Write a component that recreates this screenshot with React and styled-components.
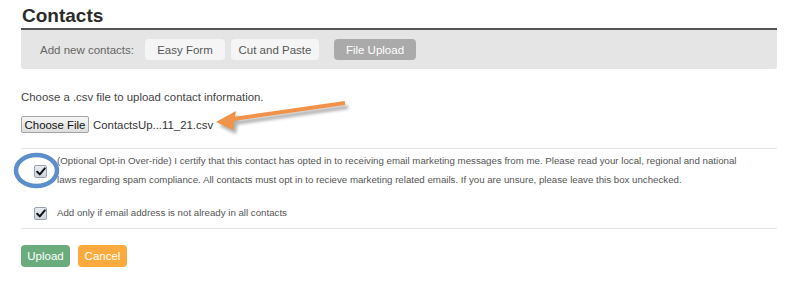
import React from "react";
import styled, { createGlobalStyle } from "styled-components";

const Global = createGlobalStyle`
  html, body { margin: 0; padding: 0; background: #fff; }
  body { font-family: "Liberation Sans", Arial, sans-serif; color: #444; }
`;

const Page = styled.div`
  position: relative;
  width: 800px;
  height: 295px;
  padding: 0 23px 0 21px;
  box-sizing: border-box;
`;

const Title = styled.h1`
  margin: 0;
  padding: 5px 0 0 1px;
  height: 23px;
  font-size: 19px;
  line-height: 22px;
  font-weight: bold;
  color: #2b2b2b;
`;

const Toolbar = styled.div`
  display: flex;
  align-items: center;
  height: 39px;
  border-top: 2px solid #555;
  background: #e5e5e5;
  border-radius: 0 0 3px 3px;
  padding-left: 19px;
  gap: 6px;
  font-size: 11.5px;
`;

const ToolLabel = styled.span`
  color: #666;
  margin-right: 5px;
`;

const TabButton = styled.span`
  display: inline-flex;
  align-items: center;
  justify-content: center;
  height: 21px;
  width: ${(p) => p.$w}px;
  border-radius: 4px;
  background: ${(p) => (p.$active ? "#aaaaaa" : "#f5f5f5")};
  color: ${(p) => (p.$active ? "#fff" : "#555")};
  margin-left: ${(p) => p.$ml || 0}px;
`;

const Intro = styled.p`
  margin: 20px 0 0 0;
  font-size: 11.4px;
  line-height: 16px;
  color: #444;
`;

const FileRow = styled.div`
  display: flex;
  align-items: center;
  margin-top: 11px;
  gap: 4px;
  font-size: 11.4px;
`;

const FileButton = styled.span`
  display: inline-flex;
  align-items: center;
  justify-content: center;
  width: 66px;
  height: 15px;
  border: 1px solid #a5a5a5;
  border-radius: 2px;
  background: linear-gradient(#f6f6f6, #dedede);
  color: #111;
  font-size: 11.4px;
`;

const FileName = styled.span`
  color: #333;
`;

const Rule = styled.hr`
  border: 0;
  border-top: 1px solid #e3e3e3;
  margin: ${(p) => p.$mt}px 0 0 0;
`;

const CheckRow = styled.div`
  display: flex;
  align-items: flex-start;
  gap: 10px;
  padding-left: 13px;
  margin-top: ${(p) => p.$mt}px;
`;

const Box = styled.span`
  flex: none;
  width: 11px;
  height: 11px;
  margin-top: ${(p) => p.$mt}px;
  border: 1px solid #9aa3b0;
  border-radius: 2px;
  background: linear-gradient(#e9edf3, #cdd4de);
  display: flex;
  align-items: center;
  justify-content: center;
`;

const CheckText = styled.div`
  font-size: 9.7px;
  line-height: 19px;
  color: #555;
  width: 690px;
`;

const Actions = styled.div`
  display: flex;
  gap: 8px;
  margin-top: 16px;
`;

const ActionButton = styled.span`
  display: inline-flex;
  align-items: center;
  justify-content: center;
  width: 49px;
  height: 22px;
  border-radius: 4px;
  background: ${(p) => p.$bg};
  color: #fff;
  font-size: 11.5px;
`;

const Overlay = styled.svg`
  position: absolute;
  left: 0;
  top: 0;
  pointer-events: none;
`;

const Check = () => (
  <svg width="10" height="9" viewBox="0 0 10 9">
    <path d="M1.2 4.8 L3.8 7.4 L8.8 1.4" fill="none" stroke="#111" strokeWidth="2" strokeLinecap="round" strokeLinejoin="round" />
  </svg>
);

export default function App() {
  return (
    <Page>
      <Global />
      <Title>Contacts</Title>
      <Toolbar>
        <ToolLabel>Add new contacts:</ToolLabel>
        <TabButton $w={80}>Easy Form</TabButton>
        <TabButton $w={88}>Cut and Paste</TabButton>
        <TabButton $w={82} $active $ml={9}>File Upload</TabButton>
      </Toolbar>
      <Intro>Choose a .csv file to upload contact information.</Intro>
      <FileRow>
        <FileButton>Choose File</FileButton>
        <FileName>ContactsUp...11_21.csv</FileName>
      </FileRow>
      <Rule $mt={15} />
      <CheckRow $mt={2}>
        <Box $mt={14}><Check /></Box>
        <CheckText>
          (Optional Opt-in Over-ride) I certify that this contact has opted in to receiving email marketing messages from me. Please read your local, regional and national laws regarding spam compliance. All contacts must opt in to recieve marketing related emails. If you are unsure, please leave this box unchecked.
        </CheckText>
      </CheckRow>
      <CheckRow $mt={14}>
        <Box $mt={4}><Check /></Box>
        <CheckText>Add only if email address is not already in all contacts</CheckText>
      </CheckRow>
      <Rule $mt={6} />
      <Actions>
        <ActionButton $bg="#6aac7c">Upload</ActionButton>
        <ActionButton $bg="#fbab3d">Cancel</ActionButton>
      </Actions>
      <Overlay width="800" height="295">
        <defs>
          <filter id="sh" x="-20%" y="-50%" width="140%" height="200%">
            <feGaussianBlur stdDeviation="1.5" />
          </filter>
        </defs>
        <g transform="translate(3,4)" filter="url(#sh)" opacity="0.45">
          <path d="M345 103 L232 119" stroke="#555" strokeWidth="4" />
          <path d="M216 122 L236 111 L233 130 Z" fill="#555" />
        </g>
        <path d="M345 103 L230 119.5" stroke="#f0924a" strokeWidth="4" strokeLinecap="butt" />
        <path d="M216 122 L236 111 L233 130 Z" fill="#f0924a" />
        <ellipse cx="36.5" cy="170.5" rx="20.5" ry="15.5" fill="none" stroke="#5b8ecb" strokeWidth="4.5" />
      </Overlay>
    </Page>
  );
}
